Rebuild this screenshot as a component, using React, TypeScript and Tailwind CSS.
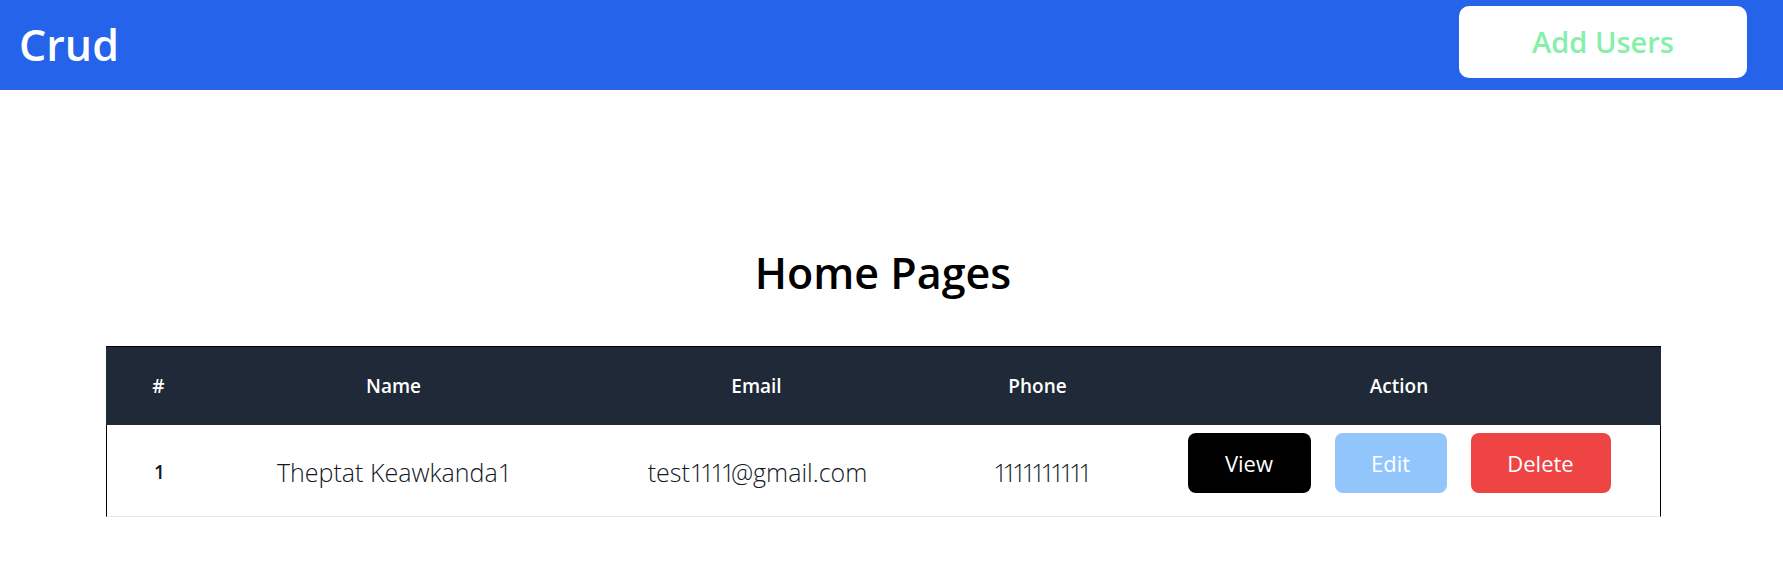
import React from "react";

const font = { fontFamily: '"Open Sans", "Noto Sans", sans-serif' };

const cols = "grid-cols-[106px_364px_362px_200px_1fr]";

export default function App() {
  const users = [
    { id: 1, name: "Theptat Keawkanda1", phone: "1111111111" },
  ];
  return (
    <div className="min-h-[571px] bg-white" style={font}>
      <nav className="flex h-[90px] items-start justify-between bg-[#2563eb] pl-[19px] pr-[36px]">
        <div className="self-center pb-[2px] text-[43px] font-semibold leading-none text-white">Crud</div>
        <button className="mt-[6px] flex h-[72px] w-[288px] items-center justify-center rounded-[10px] bg-white text-[29px] font-semibold text-[#86efac]">
          Add Users
        </button>
      </nav>

      <div className="w-[1766px]">
        <h1 className="mt-[161px] text-center text-[43px] font-semibold leading-[43px] text-black">
          Home Pages
        </h1>

        <div className="mx-auto mt-[52px] w-[1555px]">
          <div
            className={`grid h-[79px] ${cols} items-center border-t border-black bg-[#1f2937] text-[19px] font-semibold text-white`}
          >
            <div className="text-center">#</div>
            <div className="text-center">Name</div>
            <div className="text-center">Email</div>
            <div className="text-center">Phone</div>
            <div className="text-center">Action</div>
          </div>
          {users.map((u) => (
            <div
              key={u.id}
              className={`grid h-[92px] ${cols} items-center border-x border-b border-x-black border-b-[#e5e7eb] text-[#111827]`}
            >
              <div className="pt-[4px] text-center text-[19px] font-semibold">{u.id}</div>
              <div className="pt-[4px] text-center text-[25px] font-light">{u.name}</div>
              <div className="pt-[4px] text-center text-[25px] font-light">
                test<span className="tracking-[-4px]">1111</span>@gmail.com
              </div>
              <div className="pl-[4px] pt-[4px] text-center text-[25px] font-light tracking-[-4.8px]">{u.phone}</div>
              <div className="flex items-center justify-center gap-[24px] self-start pt-[8px]">
                <button className="h-[60px] w-[123px] rounded-[8px] bg-black text-[22px] text-white">View</button>
                <button className="h-[60px] w-[112px] rounded-[8px] bg-[#93c5fd] text-[22px] text-white">Edit</button>
                <button className="h-[60px] w-[140px] rounded-[8px] bg-[#ef4444] text-[22px] text-white">Delete</button>
              </div>
            </div>
          ))}
        </div>
      </div>
    </div>
  );
}
